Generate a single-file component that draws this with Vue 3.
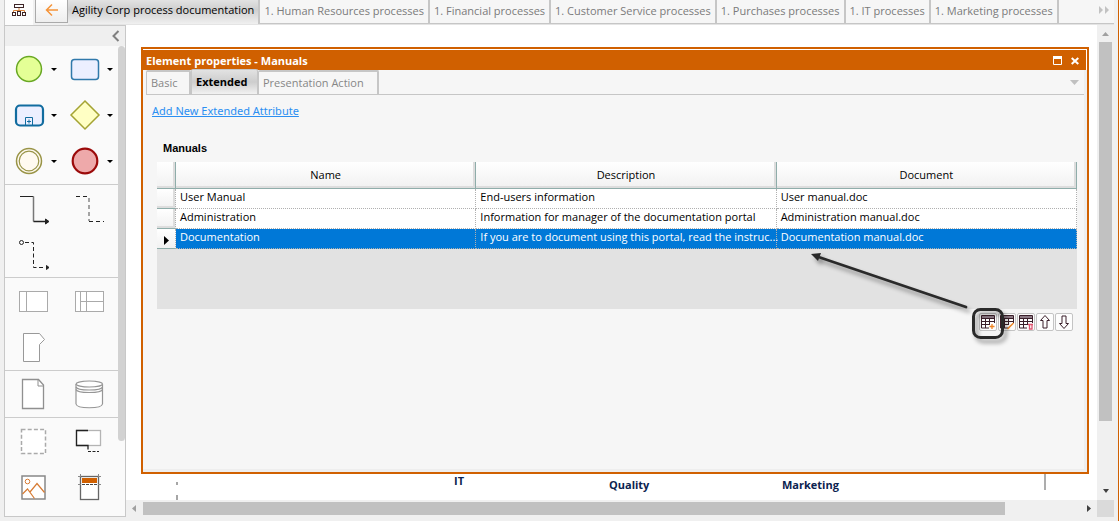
<script setup>
import { ref } from 'vue'

const tabs = [
  { label: 'Agility Corp process documentation', active: true },
  { label: '1. Human Resources processes' },
  { label: '1. Financial processes' },
  { label: '1. Customer Service processes' },
  { label: '1. Purchases processes' },
  { label: '1. IT processes' },
  { label: '1. Marketing processes' },
]

const sections = [
  [
    { name: 'Start event', icon: 'start', menu: true },
    { name: 'Task', icon: 'task', menu: true },
    { name: 'Sub-process', icon: 'sub', menu: true },
    { name: 'Gateway', icon: 'gateway', menu: true },
    { name: 'Intermediate event', icon: 'mid', menu: true },
    { name: 'End event', icon: 'end', menu: true },
  ],
  [
    { name: 'Sequence flow', icon: 'sequence' },
    { name: 'Association', icon: 'association' },
    { name: 'Message flow', icon: 'message' },
  ],
  [
    { name: 'Pool', icon: 'pool' },
    { name: 'Lane', icon: 'lane' },
    { name: 'Milestone', icon: 'milestone' },
  ],
  [
    { name: 'Data object', icon: 'doc' },
    { name: 'Data store', icon: 'store' },
  ],
  [
    { name: 'Group', icon: 'group' },
    { name: 'Annotation', icon: 'note' },
    { name: 'Image', icon: 'image' },
    { name: 'Header', icon: 'form' },
  ],
]

const rows = [
  ['User Manual', 'End-users information', 'User manual.doc'],
  ['Administration', 'Information for manager of the documentation portal', 'Administration manual.doc'],
  ['Documentation', 'If you are to document using this portal, read the instruc...', 'Documentation manual.doc'],
]
const selected = ref(2)

const tools = ['Add row', 'Edit row', 'Delete row', 'Move up', 'Move down']
</script>

<template>
  <div class="window">
    <header class="topbar">
      <button class="tree" aria-label="Process map">
        <svg width="16" height="14" viewBox="0 0 16 14" fill="none" stroke="#3d2426">
          <path d="M2.500 9V7.500H13.500V9M8 5v4" stroke="#d9823a" />
          <rect x="3.500" y="1.500" width="9" height="3" />
          <rect x="1.500" y="9.500" width="3" height="3" />
          <rect x="6.500" y="8.500" width="3" height="4" />
          <rect x="11.500" y="9.500" width="3" height="3" />
        </svg>
      </button>
      <button class="back" aria-label="Back">
        <svg width="14" height="14" viewBox="0 0 14 14" fill="none" stroke="#f5943a" stroke-width="1.500">
          <path d="M13 7H2M7 1.500L1.500 7L7 12.500" />
        </svg>
      </button>
      <nav class="tabs">
        <button v-for="t in tabs" :key="t.label" class="tab" :class="{ active: t.active }">{{ t.label }}</button>
        <button class="more" aria-label="More tabs">
          <svg width="12" height="8" viewBox="0 0 12 8" fill="#c2c2c2"><path d="M1 0l4 4-4 4zM7 0l4 4-4 4z" /></svg>
        </button>
      </nav>
    </header>

    <main class="main">
      <aside class="palette">
        <div class="palette-head">
          <button aria-label="Collapse">
            <svg width="8" height="12" viewBox="0 0 8 12" fill="none" stroke="#808080" stroke-width="2"><path d="M6.500 1L1.500 6l5 5" /></svg>
          </button>
        </div>
        <div class="palette-body">
          <div class="groups">
            <div v-for="(section, i) in sections" :key="i" class="group">
              <div v-for="item in section" :key="item.icon" class="cell">
                <button class="shape" :aria-label="item.name">
                  <svg width="42" height="46" viewBox="0 0 42 46" fill="none">
                    <circle v-if="item.icon === 'start'" cx="24" cy="23" r="12.500" fill="#e4ff96" stroke="#69a824" stroke-width="1.500" />
                    <rect v-else-if="item.icon === 'task'" x="10.500" y="13.500" width="27" height="20" rx="3" fill="#ecefff" stroke="#3079ab" stroke-width="1.500" />
                    <g v-else-if="item.icon === 'sub'" stroke="#116c9f">
                      <rect x="11" y="13.500" width="27" height="20" rx="4" fill="#ecefff" stroke-width="2.200" />
                      <path d="M20.500 33v-7.500h7V33M22 29.500h4M24 27.500v4" />
                    </g>
                    <path v-else-if="item.icon === 'gateway'" d="M24 9l14 14-14 14L10 23z" fill="#ffffc4" stroke="#a4a333" stroke-width="1.500" />
                    <g v-else-if="item.icon === 'mid'" fill="#fffaf0" stroke="#999447">
                      <circle cx="24" cy="23" r="12.500" stroke-width="1.500" />
                      <circle cx="24" cy="23" r="9.800" stroke-width="1.200" />
                    </g>
                    <circle v-else-if="item.icon === 'end'" cx="24" cy="23" r="12.300" fill="#eea9aa" stroke="#9b0a0a" stroke-width="2.200" />
                    <g v-else-if="item.icon === 'sequence'" stroke="#222">
                      <path d="M15 11.500H28.500" /><path d="M28.500 11.500V36.500" stroke="#777" stroke-width="1.500" /><path d="M28.500 36.500H42" stroke-width="1.500" />
                      <path d="M40.500 34l3.500 2.500-3.500 2.500z" fill="#222" />
                    </g>
                    <g v-else-if="item.icon === 'association'" stroke-dasharray="4 3">
                      <path d="M15 11.500H27" stroke="#222" /><path d="M28 13V36" stroke="#888" stroke-width="1.500" /><path d="M28 36.500H43" stroke="#222" />
                    </g>
                    <g v-else-if="item.icon === 'message'" stroke="#222">
                      <circle cx="16.500" cy="11.500" r="2" />
                      <path d="M20 11.500H28.500V36.500H40" stroke-dasharray="4 2.500" />
                      <path d="M41.500 34.500l2.500 2-2.500 2z" fill="#222" />
                    </g>
                    <g v-else-if="item.icon === 'pool'" stroke="#aaa">
                      <rect x="14.500" y="13.500" width="28" height="20" fill="#fff" /><path d="M21.500 14v19" />
                    </g>
                    <g v-else-if="item.icon === 'lane'" stroke="#aaa">
                      <rect x="14.500" y="13.500" width="28" height="20" fill="#fff" /><path d="M19.500 14v19M25.500 14v19M20 23.500h22" />
                    </g>
                    <path v-else-if="item.icon === 'milestone'" d="M18.500 9.500h16l5 6-5 5v17h-16z" fill="#fff" stroke="#999" />
                    <g v-else-if="item.icon === 'doc'" stroke="#909090">
                      <path d="M17.500 8.500h16l5 5.500v23.500h-21z" fill="#fff" stroke-width="1.300" />
                      <path d="M33 9v6h5.500" />
                    </g>
                    <g v-else-if="item.icon === 'store'" stroke="#969696" stroke-width="1.200">
                      <path d="M15 13v20c1 5 25.500 5 26.500 0V13" fill="#fff" />
                      <ellipse cx="28.300" cy="13" rx="13.200" ry="3" fill="#fff" />
                      <path d="M15 16c1 4 25.500 4 26.500 0M15 18.500c1 4 25.500 4 26.500 0" />
                    </g>
                    <rect v-else-if="item.icon === 'group'" x="16.500" y="11.500" width="24" height="24" fill="#fff" stroke="#aaa" stroke-width="1.500" stroke-dasharray="4 2.200" />
                    <g v-else-if="item.icon === 'note'">
                      <rect x="15.500" y="12.500" width="24" height="15" fill="#fff" stroke="#b4b4b4" stroke-width="1.300" />
                      <path d="M27 12.500H15.500v15h11.500v4" stroke="#222" stroke-width="1.300" />
                      <path d="M27 33.500h11" stroke="#222" stroke-dasharray="3 1.500" />
                    </g>
                    <g v-else-if="item.icon === 'image'">
                      <rect x="17" y="12" width="23" height="23" fill="#fff" stroke="#888" stroke-width="1.500" />
                      <path d="M17.500 30l5-5 7 9.500M25 28l7-8.500 7.500 9" stroke="#d77b33" stroke-width="1.200" />
                      <circle cx="22.500" cy="17.500" r="2.300" stroke="#d77b33" />
                    </g>
                    <g v-else-if="item.icon === 'form'">
                      <rect x="19.500" y="12.500" width="18" height="23" fill="#fff" stroke="#666" stroke-width="1.300" />
                      <rect x="21" y="14" width="15" height="5" fill="#d06000" />
                      <path d="M17 12.500h3M37 12.500h3M19.500 10v3M37.500 10v3M17 20.500h3M37 20.500h3" stroke="#888" />
                      <path d="M21 20.500h15" stroke="#444" stroke-dasharray="3 1" />
                    </g>
                  </svg>
                </button>
                <button v-if="item.menu" class="drop" :aria-label="item.name + ' types'">
                  <svg width="14" height="46" viewBox="0 0 14 46"><path d="M4 22h6l-3 3z" fill="#000" /></svg>
                </button>
              </div>
            </div>
          </div>
          <div class="palette-scroll"><span></span></div>
        </div>
      </aside>

      <div class="workspace">
        <section class="canvas">
          <svg class="dash" width="2" height="18" viewBox="0 0 2 18" fill="#a6a6a6"><path d="M0 0h2v3H0zM0 13h2v5H0z" /></svg>
          <span class="node it">IT</span>
          <span class="node quality">Quality</span>
          <span class="node marketing">Marketing</span>
          <span class="lane-end"></span>

          <section class="dialog" role="dialog" aria-labelledby="dialog-title">
            <div class="titlebar">
              <h1 id="dialog-title">Element properties - Manuals</h1>
              <button aria-label="Maximize">
                <svg width="9" height="9" viewBox="0 0 9 9" fill="none" stroke="#fff"><path d="M.5 1v7.500h8V1" /><path d="M0 1.500h9" stroke-width="3" /></svg>
              </button>
              <button aria-label="Close">
                <svg width="8" height="8" viewBox="0 0 8 8" stroke="#fff" stroke-width="2"><path d="M.7 1l6.600 6M7.300 1L.7 7" /></svg>
              </button>
            </div>
            <div class="dialog-body">
              <div class="dtabs">
                <button class="dtab basic">Basic</button>
                <button class="dtab active">Extended</button>
                <button class="dtab pres">Presentation Action</button>
                <button class="dmore" aria-label="Tab list">
                  <svg width="9" height="5" viewBox="0 0 9 5"><path d="M0 0h9L4.500 5z" fill="#c0c0c0" /></svg>
                </button>
              </div>
              <a class="add" href="#">Add New Extended Attribute</a>
              <h2>Manuals</h2>
              <div class="grid">
                <table>
                  <colgroup><col class="handle-col" /><col /><col /><col /></colgroup>
                  <thead>
                    <tr><th></th><th>Name</th><th>Description</th><th>Document</th></tr>
                  </thead>
                  <tbody>
                    <tr v-for="(r, i) in rows" :key="i" :class="{ sel: selected === i }" @click="selected = i">
                      <th scope="row">
                        <svg v-if="selected === i" width="6" height="9" viewBox="0 0 6 9"><path d="M0 0l5 4.500L0 9z" /></svg>
                      </th>
                      <td v-for="c in r" :key="c">{{ c }}</td>
                    </tr>
                  </tbody>
                </table>
              </div>
              <div class="tools">
                <button v-for="(t, i) in tools" :key="t" :aria-label="t">
                  <svg width="16" height="16" viewBox="0 0 16 16" fill="none" stroke="#3a1f2a">
                    <g v-if="i < 3">
                      <path d="M1.500 1.500h13V9M1.500 1.500v12.500H9M1.500 4.500h13M1.500 7.500h13M1.500 10.500h8M5.500 5v9M9.500 5v6" />
                      <path d="M2 3h12" stroke="#8e7b86" stroke-width="2" />
                      <path v-if="i === 0" d="M9.500 12.500h5M12 10v5" stroke="#ee8322" stroke-width="1.300" />
                      <path v-else-if="i === 1" d="M8.500 15l6-6" stroke="#ee8322" stroke-width="1.500" />
                      <path v-else d="M10 10.500h5M11.500 11v4h2.500v-4" stroke="#df5570" stroke-width="1.300" />
                    </g>
                    <path v-else-if="i === 3" d="M8 1.500L3.500 6.500h2.500v7.500h4V6.500h2.500z" />
                    <path v-else d="M8 14.500L3.500 9.500h2.500V2h4v7.500h2.500z" />
                  </svg>
                </button>
                <svg class="callout" width="205" height="95" viewBox="0 0 205 95">
                  <g fill="none" stroke="#2a2a2a" stroke-linecap="round">
                    <rect x="165.500" y="59.500" width="29" height="28" rx="7" stroke-width="3" />
                    <path d="M12 7.500L158 57" stroke-width="2.800" />
                    <path d="M3 4l10-1-3 8z" fill="#2a2a2a" stroke="none" />
                  </g>
                </svg>
              </div>
            </div>
          </section>
        </section>

        <div class="vscroll">
          <svg width="17" height="17" viewBox="0 0 17 17"><path d="M5 11h7L8.500 7z" fill="#a0a0a0" /></svg>
          <div class="vtrack"><span></span></div>
          <svg width="17" height="17" viewBox="0 0 17 17"><path d="M6 6h6L9 10z" fill="#404040" /></svg>
        </div>
        <div class="hscroll">
          <svg width="17" height="17" viewBox="0 0 17 17"><path d="M10 5v7L6 8.500z" fill="#a0a0a0" /></svg>
          <div class="htrack"><span></span></div>
          <svg width="17" height="17" viewBox="0 0 17 17"><path d="M7 5v7l4-3.500z" fill="#404040" /></svg>
        </div>
        <div class="corner"></div>
      </div>
    </main>
  </div>
</template>

<style>
body { margin: 0; }
</style>

<style scoped>
* { box-sizing: border-box; }
button { border: 0; padding: 0; margin: 0; background: none; font: inherit; color: inherit; }
svg { display: block; overflow: visible; }
h1, h2 { margin: 0; }

.window {
  height: 100vh;
  display: flex;
  flex-direction: column;
  padding: 0 4px 4px;
  background: #f0f0f0;
  border-right: 1px solid #d06000;
  font: 11px/16px "Open Sans", "Noto Sans", sans-serif;
  color: #000;
}

.topbar { display: flex; height: 25px; flex: none; }
.tree {
  width: 29px;
  display: flex;
  justify-content: center;
  padding-top: 3px;
  border-left: 1px solid #ccc;
  background: #fcfcfc;
}
.back {
  width: 33px;
  height: 23px;
  margin-left: 2px;
  display: flex;
  align-items: center;
  justify-content: center;
  padding-bottom: 2px;
  border: 1px solid #aaa;
  border-top: 0;
  background: linear-gradient(#fff, #eee);
}
.tabs { flex: 1; min-width: 0; display: flex; background: #f6f6f6; border-bottom: 1px solid #e4e4e4; }
.tab {
  padding: 0 4px 2px;
  text-align: left;
  white-space: nowrap;
  color: #7b7b7b;
  border-right: 2px solid #c6c6c6;
  border-bottom: 1px solid #c6c6c6;
}
.tab.active {
  padding-bottom: 4px;
  color: #000;
  border: 0;
  border-right: 2px solid #c6c6c6;
  background: linear-gradient(#e2e2e2, #cfcfcf 40%, #f0f0f0);
}
.more {
  flex: 1;
  display: flex;
  align-items: center;
  justify-content: flex-end;
  padding: 0 4px 4px 0;
  border-bottom: 1px solid #c6c6c6;
}

.main { flex: 1; min-height: 0; display: flex; }

.palette {
  width: 122px;
  flex: none;
  display: flex;
  flex-direction: column;
  border: 1px solid #c8c8c8;
  background: #fafafa;
}
.palette-head { height: 20px; flex: none; display: flex; justify-content: flex-end; align-items: center; padding-right: 5px; background: #efefef; }
.palette-body { flex: 1; min-height: 0; display: flex; }
.groups { flex: 1; overflow: hidden; }
.group { display: grid; grid-template-columns: 56px 56px; border-bottom: 1px solid #ccc; }
.group:last-child { border-bottom: 0; }
.cell { display: flex; height: 46px; }
.palette-scroll { width: 7px; display: flex; flex-direction: column; }
.palette-scroll span { height: 84%; border-radius: 4px; background: #d2d2d2; }

.workspace { flex: 1; min-width: 0; display: grid; grid-template: minmax(0, 1fr) 17px / minmax(0, 1fr) 17px; }
.canvas { position: relative; background: #fff; }
.vscroll { display: flex; flex-direction: column; background: #f0f0f0; }
.vtrack { flex: 1; padding: 0 2px; }
.vtrack span { display: block; height: 86%; background: #c1c1c1; }
.hscroll { display: flex; background: #f0f0f0; }
.htrack { flex: 1; padding: 2px 0; }
.htrack span { display: block; width: 92%; height: 100%; background: #c1c1c1; }
.corner { background: #dadada; }

.node { position: absolute; font-weight: bold; color: #0b2350; }
.it { left: 328px; top: 448px; }
.quality { left: 483px; top: 452px; }
.marketing { left: 656px; top: 452px; }
.dash { position: absolute; left: 50px; top: 457px; }
.lane-end { position: absolute; left: 918px; top: 449px; width: 2px; height: 16px; background: #adadad; }

.dialog {
  position: absolute;
  inset: 22px 8px 26px 15px;
  display: flex;
  flex-direction: column;
  border: 2px solid #d06000;
  background: #f6f6f6;
}
.titlebar {
  height: 21px;
  flex: none;
  display: flex;
  align-items: center;
  gap: 9px;
  padding: 1px 7px 0 3px;
  border: 1px solid #fff;
  border-width: 1px 1px 0 0;
  background: #d06000;
  color: #fff;
}
.titlebar h1 { flex: 1; font-size: 11px; font-weight: bold; line-height: 16px; }
.dialog-body { flex: 1; min-height: 0; display: flex; flex-direction: column; padding-left: 3px; border: solid #eee; border-width: 0 3px 3px 0; }

.dtabs { display: flex; align-items: flex-end; height: 25px; flex: none; border-bottom: 1px solid #c6c6c6; }
.dtab { height: 24px; padding: 0 4px; text-align: left; color: #868686; border: 1px solid #c6c6c6; border-width: 2px 2px 0 1px; border-radius: 2px 2px 0 0; white-space: nowrap; }
.dtab.basic { width: 45px; }
.dtab.pres { width: 121px; }
.dtab.active { width: 67px; height: 25px; color: #000; font-weight: bold; border-width: 1px 1px 0; background: linear-gradient(#e2e2e2, #cdcdcd 50%, #f2f2f2); }
.dmore { flex: 1; height: 24px; display: flex; align-items: center; justify-content: flex-end; padding-right: 5px; }

.add { align-self: flex-start; margin: 8px 0 0 6px; color: #2b8ff2; font-family: "Noto Sans", "Open Sans", sans-serif; }
h2 { margin: 20px 0 0 17px; font: bold 11px/18px "Liberation Sans", Arial, sans-serif; }
.grid { height: 147px; flex: none; margin: 5px 7px 0 11px; background: #e2e2e2; }
table { width: 100%; table-layout: fixed; border-collapse: separate; border-spacing: 0; }
.handle-col { width: 19px; }
th { padding: 0; font-weight: normal; border-right: 1px solid #8fadaa; border-bottom: 1px solid #8fadaa; background: linear-gradient(#fff, #f1f1f1); box-shadow: inset -2px -2px #ddd; }
thead th { height: 27px; }
tbody th { height: 20px; border-right: 1px dotted #b0b0b0; }
tbody th svg { margin: 3px 0 0 7px; }
.sel th { box-shadow: none; }
td {
  height: 20px;
  padding: 0 0 3px 4px;
  white-space: nowrap;
  background: #fff;
  border-right: 1px dotted #b0b0b0;
  border-bottom: 1px dotted #b0b0b0;
}
.sel td { background: #0078d7; color: #fff; }

.tools { position: relative; align-self: flex-end; display: flex; gap: 1px; margin: 4px 11px 0 0; }
.tools button { width: 18px; height: 18px; display: flex; align-items: center; justify-content: center; border: 1px solid #c4c4c4; border-radius: 2px; background: #fdfdfd; }
.callout { position: absolute; right: 60px; top: -63px; pointer-events: none; filter: drop-shadow(3px 4px 2px rgba(0, 0, 0, 0.4)); }
</style>
